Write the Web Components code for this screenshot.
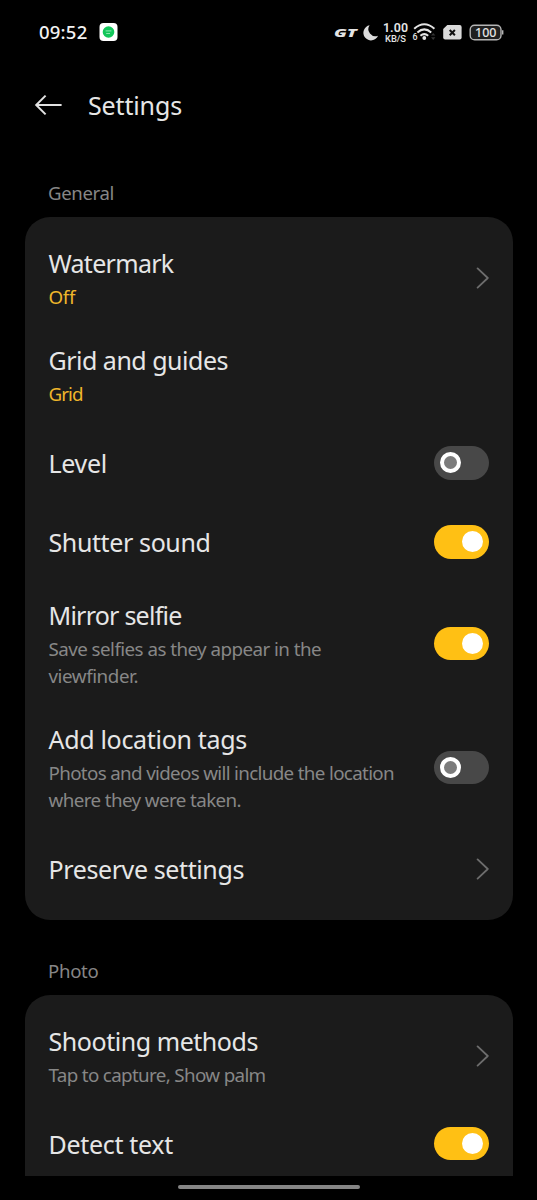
<!DOCTYPE html>
<html lang="en">
<head>
<meta charset="utf-8">
<title>Camera settings</title>
<style>
html,body{margin:0;background:#000;height:1200px;overflow:hidden}
body{font-family:"Noto Sans","Open Sans",sans-serif;color:#e6e6e6}
</style>
</head>
<body>
<camera-settings></camera-settings>
<script>
const define=(name,html,init)=>customElements.define(name,class extends HTMLElement{
  connectedCallback(){
    if(this.shadowRoot)return;
    const t=document.createElement('template');
    t.innerHTML=html;
    this.attachShadow({mode:'open'}).append(t.content.cloneNode(true));
    if(init)init(this,this.shadowRoot);
  }
});

/* One line of text whose tracking is spread so that it spans a set width. */
define('fit-text',`<style>:host{display:block;white-space:nowrap}span{display:inline-block;line-height:inherit;vertical-align:top}</style><span></span>`,(el,root)=>{
  const s=root.querySelector('span');
  const text=el.getAttribute('text');
  s.textContent=text;
  const w=parseFloat(el.getAttribute('span'));
  if(w)s.style.letterSpacing=((w-s.getBoundingClientRect().width)/text.length).toFixed(3)+'px';
});

define('net-speed',`<style>
:host{display:flex;flex-direction:column;align-items:center;font-family:Roboto,sans-serif;color:#e4e4e4}
b{font-weight:600;font-size:12.4px;line-height:12px;height:12px;letter-spacing:.1px}
small{font-weight:500;font-size:9.4px;line-height:9px;height:9px;letter-spacing:-.1px}
</style><b>1.00</b><small>KB/S</small>`);

define('status-icons',`<style>
:host{display:grid;grid-template-columns:50px 27px 95px;width:172px;height:24px;padding-top:1px}
svg{display:block}
net-speed{padding-top:1px}
text{fill:#e4e4e4}
</style>
<svg width="50" height="24" viewBox="332 21 50 24">
 <text x="334" y="36.8" style="font:italic 900 10.4px 'Noto Sans',sans-serif" textLength="23" lengthAdjust="spacingAndGlyphs">GT</text>
 <path d="M369.6 25.3a7.6 7.6 0 1 0 8.4 10.4a7 7 0 0 1-8.4-10.4z" fill="#dcdcdc"/>
</svg>
<net-speed></net-speed>
<svg width="95" height="24" viewBox="409 21 95 24">
 <g fill="none" stroke="#e4e4e4" stroke-width="2">
  <path d="M414.2 28.8Q424.3 19.8 434.4 28.8"/>
  <path d="M417.4 32.4Q424.3 26.4 431.2 32.4"/>
  <path d="M420.4 35.8Q424.3 32.4 428.2 35.8"/>
 </g>
 <circle cx="424.3" cy="38" r="1.9" fill="#e4e4e4"/>
 <text x="412.6" y="40.3" style="font:500 8.8px Roboto,sans-serif">6</text>
 <path d="M431 35.5l2.2-2.6 2.2 2.6zM431 37.3l2.2 2.6 2.2-2.6z" fill="#333"/>
 <path d="M447.3 25H459.6a2 2 0 0 1 2 2V37.6a2 2 0 0 1-2 2H445.2a2 2 0 0 1-2-2V29z" fill="#dadada"/>
 <path d="M449.7 30l5.2 5.2M454.9 30l-5.2 5.2" stroke="#111" stroke-width="2"/>
 <rect x="470.2" y="25.2" width="30.8" height="14.6" rx="4.4" fill="#202020" stroke="#b5b5b5" stroke-width="1.4"/>
 <path d="M502.7 30.2v4.4" stroke="#b5b5b5" stroke-width="1.4"/>
 <text x="475" y="37" style="font:500 12.6px 'Noto Sans',sans-serif" textLength="21.4" lengthAdjust="spacingAndGlyphs">100</text>
</svg>`);

define('status-bar',`<style>
:host{display:flex;height:65px;flex:none;box-sizing:border-box;padding:0 33px 1px 39px;align-items:center}
fit-text{font-size:18.5px;line-height:24px;font-weight:500;color:#f2f2f2;width:60px}
.app{display:block;flex:1}
</style>
<fit-text text="09:52" span="48.5"></fit-text>
<svg class="app" height="20" viewBox="0 0 20 20" preserveAspectRatio="xMinYMid">
 <rect x=".5" y="1" width="18" height="18" rx="4" fill="#fff"/>
 <circle cx="9.5" cy="10" r="5.8" fill="#12c65a"/>
 <path d="M6.6 8.9h5.8M7.2 11.5h3.8" stroke="#8be8ae" stroke-width="1"/>
</svg>
<status-icons></status-icons>`);

define('title-bar',`<style>
:host{display:flex;height:80px;flex:none;align-items:center;padding-left:34px;gap:26px}
svg{display:block}
fit-text{font-size:25px;line-height:34px}
</style>
<svg width="28" height="24" viewBox="0 0 28 24" fill="none" stroke="#e2e2e2" stroke-width="2"><path d="M11.6 2.6L2.2 12l9.4 9.4M2 12H27.6"/></svg>
<fit-text text="Settings" span="94"></fit-text>`);

define('toggle-switch',`<style>
:host{display:flex;box-sizing:border-box;width:54.6px;height:33.4px;border-radius:17px;background:#484848;padding:0 6px;align-items:center}
i{display:block;box-sizing:border-box;width:21px;height:21px;border-radius:50%;border:4.2px solid #fff;background:#7c7c7c}
:host([on]){background:#ffc014;justify-content:flex-end}
:host([on]) i{background:#fff}
</style><i></i>`);

define('chevron-icon',`<style>:host{display:block}svg{display:block}</style>
<svg width="13" height="22" viewBox="0 0 13 22" fill="none" stroke="#6d6d6d" stroke-width="1.8" stroke-linecap="round" stroke-linejoin="round"><path d="M1.6 1.4L11.8 11 1.6 20.6"/></svg>`);

define('setting-row',`<style>
:host{display:flex;box-sizing:border-box;align-items:center;justify-content:space-between;padding:16px 24px;min-height:79px}
:host([notes]) .copy{margin:.6px 0 -.6px}
.title{font-size:25px;line-height:34px}
.notes{display:block;font-size:18.8px;line-height:27px;color:#878787;padding-top:4px}
.notes:empty{display:none}
:host([accent]) .notes{color:#efb62b}
</style>
<div class="copy"><fit-text class="title"></fit-text><div class="notes"></div></div><slot></slot>`,(el,root)=>{
  const title=document.createElement('fit-text');
  title.className='title';
  title.setAttribute('text',el.getAttribute('label'));
  title.setAttribute('span',el.getAttribute('span'));
  root.querySelector('.title').replaceWith(title);
  for(const note of (el.getAttribute('notes')||'').split('|').filter(Boolean)){
    const [text,w]=note.split('=');
    const line=document.createElement('fit-text');
    line.setAttribute('text',text);
    line.setAttribute('span',w);
    root.querySelector('.notes').append(line);
  }
});

define('settings-card',`<style>
:host{display:block;flex:none;box-sizing:border-box;margin:0 24.5px;padding:12.2px 0 11.4px;background:#1b1b1b;border-radius:25px}
:host([open]){border-radius:25px 25px 0 0;flex:1 1 0;min-height:0;overflow:hidden;padding-bottom:0}
</style><slot></slot>`);

define('section-label',`<style>
:host{display:block;flex:none;padding-left:48px;font-size:18.6px;line-height:27px;color:#868686}
</style><slot></slot>`);

define('nav-handle',`<style>
:host{display:flex;flex:none;box-sizing:border-box;height:24px;padding-bottom:2px;justify-content:center;align-items:center}
i{display:block;width:182px;height:4px;border-radius:2px;background:#858585}
</style><i></i>`);

define('camera-settings',`<style>
:host{display:flex;flex-direction:column;height:1200px;width:537px;overflow:hidden}
.general{padding-top:33.8px;height:38.5px}
.photo{padding-top:36.8px;height:38.4px}
</style>
<status-bar></status-bar>
<title-bar></title-bar>
<section-label class="general"><fit-text text="General" span="66"></fit-text></section-label>
<settings-card>
 <setting-row accent label="Watermark" span="125" notes="Off=26.5"><chevron-icon></chevron-icon></setting-row>
 <setting-row accent label="Grid and guides" span="179.5" notes="Grid=34"></setting-row>
 <setting-row label="Level" span="58.5"><toggle-switch></toggle-switch></setting-row>
 <setting-row label="Shutter sound" span="162"><toggle-switch on></toggle-switch></setting-row>
 <setting-row label="Mirror selfie" span="133" notes="Save selfies as they appear in the=272.5|viewfinder.=89.5"><toggle-switch on></toggle-switch></setting-row>
 <setting-row label="Add location tags" span="198.5" notes="Photos and videos will include the location=345.5|where they were taken.=192.5"><toggle-switch></toggle-switch></setting-row>
 <setting-row label="Preserve settings" span="195.5"><chevron-icon></chevron-icon></setting-row>
</settings-card>
<section-label class="photo"><fit-text text="Photo" span="50.5"></fit-text></section-label>
<settings-card open>
 <setting-row label="Shooting methods" span="209.5" notes="Tap to capture, Show palm=217"><chevron-icon></chevron-icon></setting-row>
 <setting-row label="Detect text" span="124.5"><toggle-switch on></toggle-switch></setting-row>
</settings-card>
<nav-handle></nav-handle>`);
</script>
</body>
</html>
